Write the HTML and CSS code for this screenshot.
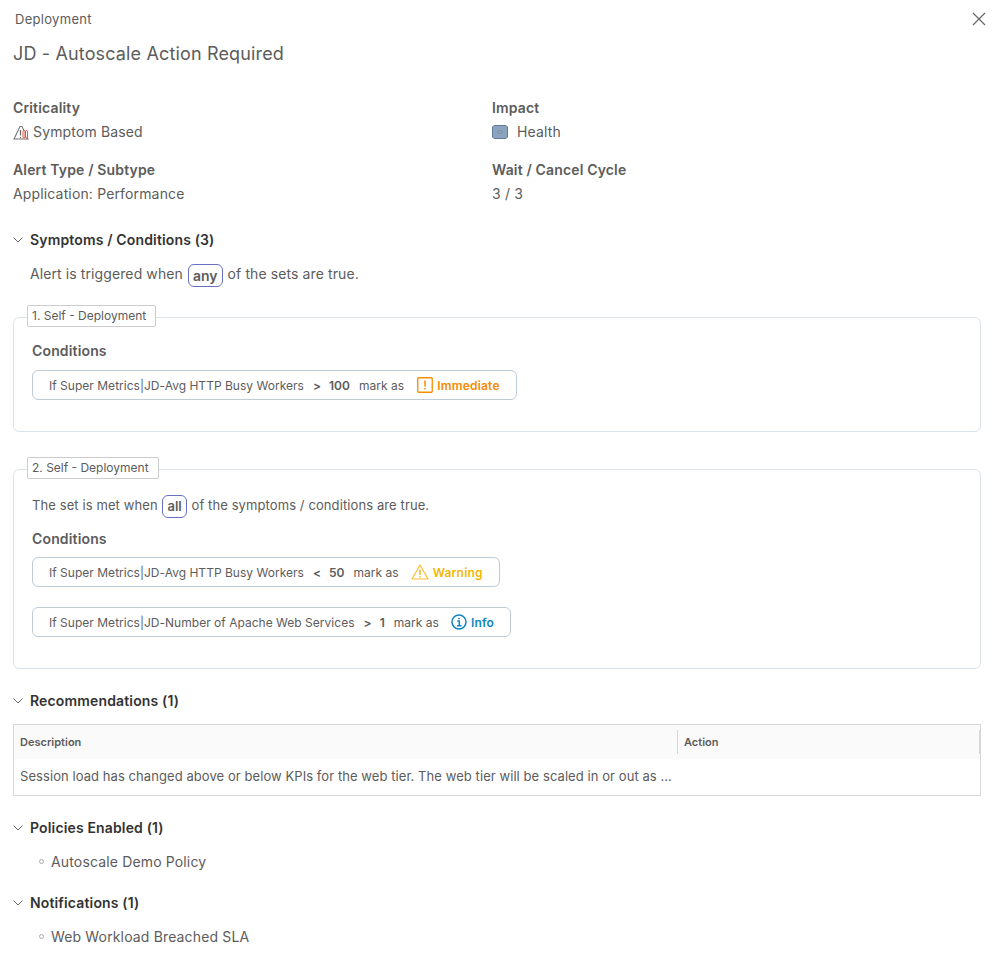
FILE: index.html
```html
<!DOCTYPE html>
<html lang="en">
<head>
<meta charset="UTF-8">
<title>Alert Definition</title>
<link rel="stylesheet" href="styles.css">
</head>
<body>
<div class="panel">
    <div class="top-bar">
        <span class="kind">Deployment</span>
        <button class="close" aria-label="Close">
            <svg width="14" height="14" viewBox="0 0 14 14"><path d="M1 1L13 13M13 1L1 13" stroke="#666" stroke-width="1.2" fill="none"/></svg>
        </button>
    </div>
    <h1>JD - Autoscale Action Required</h1>

    <div class="props">
        <div class="prop">
            <div class="prop-label">Criticality</div>
            <div class="prop-value">
                <svg class="crit-icon" width="17" height="15" viewBox="0 0 17 15">
                    <path d="M1 14L7 1.5L9 1.5L15 14Z" fill="none" stroke="#777" stroke-width="1.1"/>
                    <path d="M7.5 5V10.5M7.5 12V13" stroke="#666" stroke-width="1.2"/>
                    <path d="M10 6.5a1 1 0 0 1 2 0V12a1 1 0 0 1-2 0ZM12.5 6.5a1 1 0 0 1 2 0V12a1 1 0 0 1-2 0Z" fill="#fff" stroke="#d9472f" stroke-width=".9"/>
                </svg>
                Symptom Based
            </div>
        </div>
        <div class="prop">
            <div class="prop-label">Impact</div>
            <div class="prop-value">
                <svg class="impact-icon" width="16" height="14" viewBox="0 0 16 14">
                    <path d="M2 .5H14L15.500 2V12L14 13.500H2L.5 12V2Z" fill="#8ba3bd" stroke="#5f7b9c"/>
                    <ellipse cx="8" cy="7" rx="2.500" ry="1.500" fill="none" stroke="#7a93ae"/>
                </svg>
                Health
            </div>
        </div>
        <div class="prop">
            <div class="prop-label">Alert Type / Subtype</div>
            <div class="prop-value">Application: Performance</div>
        </div>
        <div class="prop">
            <div class="prop-label">Wait / Cancel Cycle</div>
            <div class="prop-value">3 / 3</div>
        </div>
    </div>

    <div class="section-head first">
        <svg class="chevron" width="10" height="6" viewBox="0 0 10 6"><path d="M.5 .5L5 5L9.500 .5" fill="none" stroke="#666"/></svg>
        Symptoms / Conditions (3)
    </div>
    <p class="trigger">Alert is triggered when <span class="pill">any</span> of the sets are true.</p>

    <div class="set set-one">
        <div class="set-title">1. Self - Deployment</div>
        <div class="cond-title">Conditions</div>
        <div class="cond">
            <span>If Super Metrics|JD-Avg HTTP Busy Workers</span>
            <b class="op">&gt;</b>
            <b class="num">100</b>
            <span class="mark">mark as</span>
            <span class="sev immediate">
                <svg width="16" height="16" viewBox="0 0 16 16"><rect x=".75" y=".75" width="14.500" height="14.500" rx="1" fill="none" stroke="#f38b00" stroke-width="1.300"/><path d="M8 3.500V9.500M8 11V12.500" stroke="#f38b00" stroke-width="1.500"/></svg>
                Immediate
            </span>
        </div>
    </div>

    <div class="set set-two">
        <div class="set-title">2. Self - Deployment</div>
        <p class="met">The set is met when <span class="pill small">all</span> of the symptoms / conditions are true.</p>
        <div class="cond-title">Conditions</div>
        <div class="cond">
            <span>If Super Metrics|JD-Avg HTTP Busy Workers</span>
            <b class="op">&lt;</b>
            <b class="num">50</b>
            <span class="mark">mark as</span>
            <span class="sev warning">
                <svg width="18" height="16" viewBox="0 0 18 16"><path d="M9 1L17 15H1Z" fill="none" stroke="#fbc02d" stroke-width="1.200" stroke-linejoin="round"/><path d="M9 5.500V11M9 12.200V13.500" stroke="#e8a800" stroke-width="1.200"/></svg>
                Warning
            </span>
        </div>
        <div class="cond">
            <span>If Super Metrics|JD-Number of Apache Web Services</span>
            <b class="op">&gt;</b>
            <b class="num">1</b>
            <span class="mark">mark as</span>
            <span class="sev info">
                <svg width="16" height="16" viewBox="0 0 16 16"><circle cx="8" cy="8" r="7" fill="none" stroke="#0f85c2" stroke-width="1.500"/><path d="M6.300 7H8.300V11.800M6 11.800H10.500M8 3.800V5.300" fill="none" stroke="#0f85c2" stroke-width="1.500"/></svg>
                Info
            </span>
        </div>
    </div>

    <div class="section-head recs">
        <svg class="chevron" width="10" height="6" viewBox="0 0 10 6"><path d="M.5 .5L5 5L9.500 .5" fill="none" stroke="#666"/></svg>
        Recommendations (1)
    </div>
    <div class="grid">
        <div class="grid-head">
            <div class="col-desc">Description</div>
            <div class="col-action">Action</div>
        </div>
        <div class="grid-row">
            <div class="cell-desc">Session load has changed above or below KPIs for the web tier. The web tier will be scaled in or out as ...</div>
        </div>
    </div>

    <div class="section-head policies">
        <svg class="chevron" width="10" height="6" viewBox="0 0 10 6"><path d="M.5 .5L5 5L9.500 .5" fill="none" stroke="#666"/></svg>
        Policies Enabled (1)
    </div>
    <ul class="items">
        <li>Autoscale Demo Policy</li>
    </ul>

    <div class="section-head notes">
        <svg class="chevron" width="10" height="6" viewBox="0 0 10 6"><path d="M.5 .5L5 5L9.500 .5" fill="none" stroke="#666"/></svg>
        Notifications (1)
    </div>
    <ul class="items">
        <li>Web Workload Breached SLA</li>
    </ul>
</div>
</body>
</html>
```

FILE: styles.css
```css
* {
    box-sizing: border-box;
}

body {
    margin: 0;
    background: #fff;
    color: #5c5c5c;
    font-family: Inter, "Open Sans", sans-serif;
    font-size: 14px;
    letter-spacing: .15px;
}

.panel {
    padding: 10px 18px 20px 13px;
}

.top-bar {
    display: flex;
    justify-content: space-between;
    align-items: center;
    height: 18px;
    padding-left: 2px;
}

.kind {
    font-size: 13px;
    letter-spacing: .3px;
}

.close {
    border: none;
    background: none;
    padding: 0;
    margin-right: -5px;
    height: 14px;
}

h1 {
    margin: 14px 0 0;
    font-size: 18px;
    line-height: 24px;
    font-weight: 400;
}

.props {
    display: grid;
    grid-template-columns: 479px 1fr;
    row-gap: 14px;
    margin-top: 30px;
}

.prop-label {
    font-weight: 600;
    line-height: 24px;
}

.prop-value {
    display: flex;
    align-items: center;
    line-height: 24px;
}

.crit-icon {
    margin-right: 3px;
}

.impact-icon {
    margin-right: 9px;
}

.section-head {
    display: flex;
    align-items: center;
    color: #333;
    font-weight: 600;
    line-height: 24px;
}

.chevron {
    margin-right: 7px;
}

.section-head.first {
    margin-top: 22px;
}

.section-head.recs {
    margin-top: 20px;
}

.section-head.policies {
    margin-top: 20px;
}

.section-head.notes {
    margin-top: 17px;
}

.trigger {
    margin: 10px 0 0 17px;
    line-height: 24px;
    letter-spacing: .1px;
}

.pill {
    display: inline-block;
    margin: 0 1px;
    padding: 0 4px;
    border: 1px solid #6870c4;
    border-radius: 6px;
    font-weight: 600;
    line-height: 21px;
    letter-spacing: 0;
    vertical-align: middle;
}

.pill.small {
    font-size: 13px;
}

.set {
    position: relative;
    padding: 0 18px;
    border: 1px solid #dbe3e8;
    border-radius: 6px;
}

.set-title {
    position: absolute;
    top: -13px;
    left: 13px;
    padding: 0 9px 0 4px;
    height: 22px;
    border: 1px solid #ccc;
    border-radius: 2px;
    background: #fff;
    font-size: 12px;
    line-height: 20px;
    letter-spacing: 0;
}

.set-one {
    margin-top: 30px;
    height: 115px;
    padding-top: 21px;
}

.set-two {
    margin-top: 37px;
    height: 200px;
    padding-top: 23px;
}

.met {
    margin: 0;
    font-size: 13px;
    line-height: 24px;
    letter-spacing: .1px;
}

.cond-title {
    font-weight: 600;
    line-height: 24px;
}

.set-two .cond-title {
    margin-top: 9px;
}

.cond {
    display: flex;
    align-items: center;
    width: fit-content;
    height: 30px;
    margin-top: 7px;
    padding: 1px 16px 0;
    border: 1px solid #bfccd6;
    border-radius: 6px;
    font-size: 12px;
    letter-spacing: .02px;
}

.set-two .cond {
    margin-top: 6px;
}

.set-two .cond + .cond {
    margin-top: 20px;
}

.op {
    margin-left: 9px;
    font-weight: 600;
}

.num {
    margin-left: 8px;
    font-weight: 600;
}

.mark {
    margin-left: 9px;
}

.sev {
    display: flex;
    align-items: center;
    gap: 4px;
    margin-left: 13px;
    font-weight: 600;
    letter-spacing: .2px;
}

.immediate {
    color: #f38b00;
}

.warning {
    margin-left: 12px;
    color: #f2b705;
}

.info {
    margin-left: 12px;
    color: #0f85c2;
}

.grid {
    margin-top: 11px;
    border: 1px solid #d7d7d7;
}

.grid-head {
    display: flex;
    align-items: center;
    height: 34px;
    background: #fafafa;
    font-size: 11px;
    font-weight: 600;
    letter-spacing: 0;
}

.col-desc {
    width: 664px;
    padding-left: 6px;
    line-height: 24px;
    border-right: 1px solid #d7d7d7;
}

.col-action {
    flex: 1;
    padding-left: 6px;
    line-height: 24px;
    border-right: 1px solid #d7d7d7;
}

.grid-row {
    height: 36px;
}

.cell-desc {
    margin-left: 6px;
    font-size: 13px;
    line-height: 35px;
    letter-spacing: .07px;
    white-space: nowrap;
}

.items {
    margin: 10px 0 0;
    padding: 0 0 0 26px;
    list-style: none;
    line-height: 24px;
}

.items li {
    display: flex;
    align-items: center;
}

.items li::before {
    content: "";
    width: 3px;
    height: 3px;
    margin-right: 7px;
    border: 1px solid #aaa;
    border-radius: 50%;
}
```
